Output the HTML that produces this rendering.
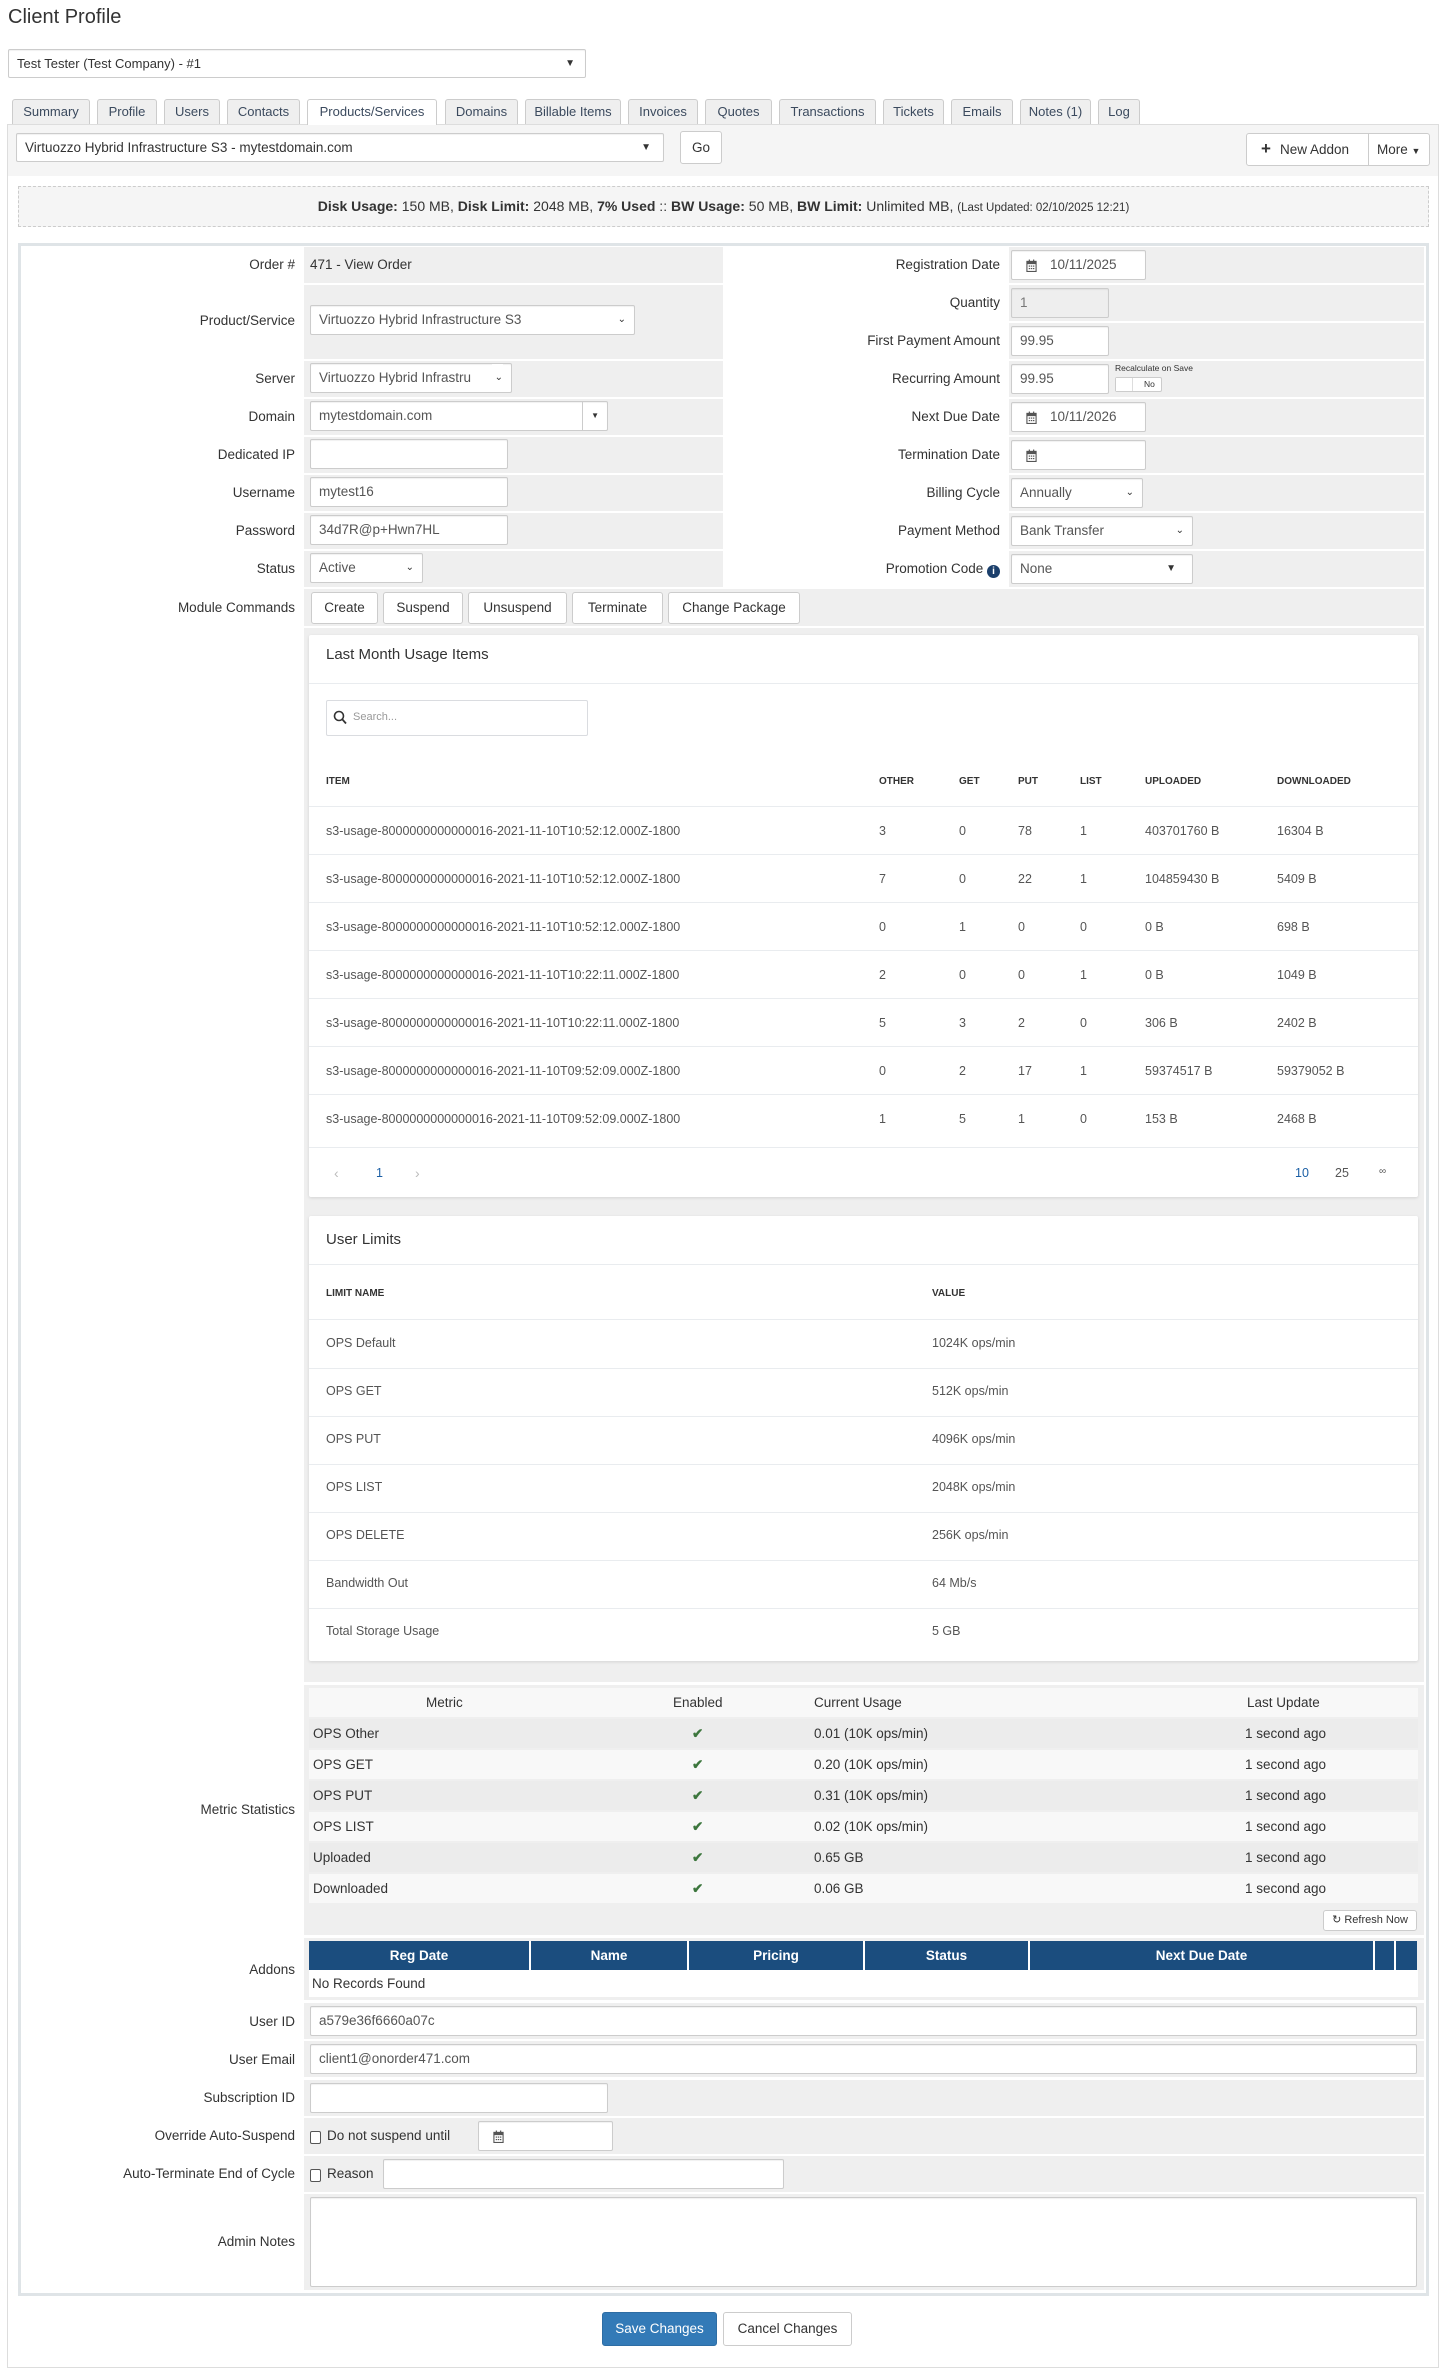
<!DOCTYPE html>
<html><head><meta charset="utf-8">
<style>
*{box-sizing:border-box;margin:0;padding:0}
body{width:1446px;height:2376px;background:#fff;font-family:"Liberation Sans",sans-serif;font-size:13.5px;color:#333;position:relative;overflow:hidden}
.a{position:absolute}
.inp{position:absolute;background:#fff;border:1px solid #ccc;border-radius:2px;height:30px;line-height:28px;padding-left:8px;color:#555;font-size:13.5px;white-space:nowrap;overflow:hidden;box-shadow:inset 0 1px 1px rgba(0,0,0,.06)}
.lbl{position:absolute;text-align:right;white-space:nowrap;font-size:13.5px}
.g{position:absolute;background:#efefef}
.btn{position:absolute;background:#fff;border:1px solid #ccc;border-radius:3px;text-align:center;color:#333;font-size:13.5px}
.tab{position:absolute;top:99px;height:25px;line-height:24px;background:#efefef;border:1px solid #ccc;border-bottom:none;border-radius:3px 3px 0 0;font-size:13px;color:#3b4a5e;text-align:center}
.car{position:absolute;right:8px;font-size:10px;color:#333}
.panel{position:absolute;left:309px;width:1109px;background:#fff;box-shadow:0 1px 3px rgba(0,0,0,.12);border-radius:2px}
.ut{position:absolute;font-size:12.5px;color:#555;white-space:nowrap}
.uh{position:absolute;font-size:10px;font-weight:bold;color:#333}
.sep{position:absolute;left:0;right:0;height:1px;background:#e9ecef}
.mr{position:absolute;left:309px;width:1109px;height:29px;line-height:29px}
.mr span{position:absolute}
.ah{position:absolute;top:1941px;height:29px;line-height:29px;background:#1b4d7e;color:#fff;font-weight:bold;text-align:center;border-right:2px solid #fff}
</style></head><body>

<div class="a" style="left:8px;top:6px;font-size:20px;color:#333">Client Profile</div>
<div class="inp" style="left:8px;top:49px;width:578px;height:29px;line-height:27px;font-size:13px;color:#333">Test Tester (Test Company) - #1<span class="car" style="right:10px">▼</span></div>

<div class="tab" style="left:12px;width:78px">Summary</div>
<div class="tab" style="left:97px;width:60px">Profile</div>
<div class="tab" style="left:164px;width:56px">Users</div>
<div class="tab" style="left:227px;width:73px">Contacts</div>
<div class="tab" style="left:307px;width:130px;background:#fff;height:26px;z-index:3">Products/Services</div>
<div class="tab" style="left:445px;width:73px">Domains</div>
<div class="tab" style="left:525px;width:96px">Billable Items</div>
<div class="tab" style="left:628px;width:70px">Invoices</div>
<div class="tab" style="left:705px;width:67px">Quotes</div>
<div class="tab" style="left:779px;width:97px">Transactions</div>
<div class="tab" style="left:883px;width:61px">Tickets</div>
<div class="tab" style="left:951px;width:62px">Emails</div>
<div class="tab" style="left:1020px;width:71px">Notes (1)</div>
<div class="tab" style="left:1098px;width:42px">Log</div>

<div class="a" style="left:7px;top:124px;width:1432px;height:2244px;border:1px solid #ddd;background:#fff"></div>
<div class="a" style="left:8px;top:125px;width:1430px;height:51px;background:#f5f5f5"></div>
<div class="inp" style="left:16px;top:133px;width:648px;height:29px;color:#333">Virtuozzo Hybrid Infrastructure S3 - mytestdomain.com<span class="car" style="right:12px">▼</span></div>
<div class="btn" style="left:680px;top:131px;width:42px;height:33px;line-height:31px">Go</div>
<div class="btn" style="left:1246px;top:133px;width:184px;height:33px;line-height:31px;text-align:left"><span style="position:absolute;left:14px;font-size:17px;font-weight:bold;top:-1px">+</span><span style="position:absolute;left:33px">New Addon</span><span style="position:absolute;left:121px;top:0;bottom:0;border-left:1px solid #ccc"></span><span style="position:absolute;left:130px">More <span style="font-size:9px">▼</span></span></div>

<div class="a" style="left:18px;top:186px;width:1411px;height:41px;border:1px dashed #ccc;background:#f5f5f5;text-align:center;line-height:39px;font-size:14px"><b>Disk Usage:</b> 150 MB, <b>Disk Limit:</b> 2048 MB, <b>7% Used</b> :: <b>BW Usage:</b> 50 MB, <b>BW Limit:</b> Unlimited MB, <span style="font-size:11.5px">(Last Updated: 02/10/2025 12:21)</span></div>

<div class="a" style="left:18px;top:243px;width:1411px;height:2053px;border:3px solid #dfe4e7;background:#fff"></div>

<div class="g" style="left:304px;top:247px;width:419px;height:36px"></div>
<div class="g" style="left:304px;top:285px;width:419px;height:74px"></div>
<div class="g" style="left:304px;top:361px;width:419px;height:36px"></div>
<div class="g" style="left:304px;top:399px;width:419px;height:36px"></div>
<div class="g" style="left:304px;top:437px;width:419px;height:36px"></div>
<div class="g" style="left:304px;top:475px;width:419px;height:36px"></div>
<div class="g" style="left:304px;top:513px;width:419px;height:36px"></div>
<div class="g" style="left:304px;top:551px;width:419px;height:36px"></div>
<div class="g" style="left:1009px;top:247px;width:415px;height:36px"></div>
<div class="g" style="left:1009px;top:285px;width:415px;height:36px"></div>
<div class="g" style="left:1009px;top:323px;width:415px;height:36px"></div>
<div class="g" style="left:1009px;top:361px;width:415px;height:36px"></div>
<div class="g" style="left:1009px;top:399px;width:415px;height:36px"></div>
<div class="g" style="left:1009px;top:437px;width:415px;height:36px"></div>
<div class="g" style="left:1009px;top:475px;width:415px;height:36px"></div>
<div class="g" style="left:1009px;top:513px;width:415px;height:36px"></div>
<div class="g" style="left:1009px;top:551px;width:415px;height:36px"></div>
<div class="g" style="left:304px;top:589px;width:1120px;height:37px"></div>
<div class="g" style="left:304px;top:628px;width:1120px;height:1054px"></div>
<div class="g" style="left:304px;top:1685px;width:1120px;height:250px"></div>
<div class="g" style="left:304px;top:1938px;width:1120px;height:62px"></div>
<div class="g" style="left:304px;top:2003px;width:1120px;height:36px"></div>
<div class="g" style="left:304px;top:2041px;width:1120px;height:36px"></div>
<div class="g" style="left:304px;top:2080px;width:1120px;height:36px"></div>
<div class="g" style="left:304px;top:2118px;width:1120px;height:36px"></div>
<div class="g" style="left:304px;top:2156px;width:1120px;height:36px"></div>
<div class="g" style="left:304px;top:2194px;width:1120px;height:96px"></div>

<div class="lbl" style="right:1151px;top:257px">Order #</div>
<div class="lbl" style="right:1151px;top:313px">Product/Service</div>
<div class="lbl" style="right:1151px;top:371px">Server</div>
<div class="lbl" style="right:1151px;top:409px">Domain</div>
<div class="lbl" style="right:1151px;top:447px">Dedicated IP</div>
<div class="lbl" style="right:1151px;top:485px">Username</div>
<div class="lbl" style="right:1151px;top:523px">Password</div>
<div class="lbl" style="right:1151px;top:561px">Status</div>
<div class="lbl" style="right:1151px;top:600px">Module Commands</div>
<div class="lbl" style="right:1151px;top:1802px">Metric Statistics</div>
<div class="lbl" style="right:1151px;top:1962px">Addons</div>
<div class="lbl" style="right:1151px;top:2014px">User ID</div>
<div class="lbl" style="right:1151px;top:2052px">User Email</div>
<div class="lbl" style="right:1151px;top:2090px">Subscription ID</div>
<div class="lbl" style="right:1151px;top:2128px">Override Auto-Suspend</div>
<div class="lbl" style="right:1151px;top:2166px">Auto-Terminate End of Cycle</div>
<div class="lbl" style="right:1151px;top:2234px">Admin Notes</div>

<div class="lbl" style="right:446px;top:257px">Registration Date</div>
<div class="lbl" style="right:446px;top:295px">Quantity</div>
<div class="lbl" style="right:446px;top:333px">First Payment Amount</div>
<div class="lbl" style="right:446px;top:371px">Recurring Amount</div>
<div class="lbl" style="right:446px;top:409px">Next Due Date</div>
<div class="lbl" style="right:446px;top:447px">Termination Date</div>
<div class="lbl" style="right:446px;top:485px">Billing Cycle</div>
<div class="lbl" style="right:446px;top:523px">Payment Method</div>
<div class="lbl" style="right:446px;top:561px">Promotion Code <span style="display:inline-block;width:13px;height:13px;border-radius:50%;background:#1b3f6b;color:#fff;font-size:10px;line-height:13px;text-align:center;font-weight:bold;vertical-align:-1px">i</span></div>

<div class="a" style="left:310px;top:257px">471 - View Order</div>
<div class="inp" style="left:310px;top:305px;width:325px">Virtuozzo Hybrid Infrastructure S3<span class="car">⌄</span></div>
<div class="inp" style="left:310px;top:363px;width:202px;padding-right:20px">Virtuozzo Hybrid Infrastru<span class="car" style="background:#fff;padding-left:3px">⌄</span></div>
<div class="inp" style="left:310px;top:401px;width:298px">mytestdomain.com<span style="position:absolute;left:271px;top:0;bottom:0;border-left:1px solid #ccc"></span><span class="car" style="font-size:8px">▼</span></div>
<div class="inp" style="left:310px;top:439px;width:198px"></div>
<div class="inp" style="left:310px;top:477px;width:198px">mytest16</div>
<div class="inp" style="left:310px;top:515px;width:198px">34d7R@p+Hwn7HL</div>
<div class="inp" style="left:310px;top:553px;width:113px">Active<span class="car">⌄</span></div>
<div class="btn" style="left:311px;top:592px;width:67px;height:32px;line-height:30px">Create</div>
<div class="btn" style="left:383px;top:592px;width:80px;height:32px;line-height:30px">Suspend</div>
<div class="btn" style="left:468px;top:592px;width:99px;height:32px;line-height:30px">Unsuspend</div>
<div class="btn" style="left:572px;top:592px;width:91px;height:32px;line-height:30px">Terminate</div>
<div class="btn" style="left:668px;top:592px;width:132px;height:32px;line-height:30px">Change Package</div>

<svg width="0" height="0" style="position:absolute"><defs><symbol id="cal" viewBox="0 0 12 14"><rect x="1" y="2.5" width="10" height="11" fill="none" stroke="#555" stroke-width="1.2"/><rect x="1" y="2.5" width="10" height="3" fill="#555"/><rect x="3" y="0.5" width="1.3" height="3" fill="#555"/><rect x="7.7" y="0.5" width="1.3" height="3" fill="#555"/><g fill="#555"><rect x="3" y="7" width="1.5" height="1.3"/><rect x="5.3" y="7" width="1.5" height="1.3"/><rect x="7.6" y="7" width="1.5" height="1.3"/><rect x="3" y="9.7" width="1.5" height="1.3"/><rect x="5.3" y="9.7" width="1.5" height="1.3"/><rect x="7.6" y="9.7" width="1.5" height="1.3"/></g></symbol></defs></svg>
<div class="inp" style="left:1011px;top:250px;width:135px"><svg width="11" height="13" style="position:absolute;left:14px;top:8px"><use href="#cal"/></svg><span style="position:absolute;left:38px">10/11/2025</span></div>
<div class="inp" style="left:1011px;top:288px;width:98px;background:#eee;color:#777">1</div>
<div class="inp" style="left:1011px;top:326px;width:98px">99.95</div>
<div class="inp" style="left:1011px;top:364px;width:98px">99.95</div>
<div class="a" style="left:1115px;top:363px;font-size:8.5px;color:#333">Recalculate on Save</div>
<div class="a" style="left:1115px;top:377px;width:47px;height:15px;border:1px solid #ccc;border-radius:2px;background:#fff;font-size:8.5px;line-height:13px"><span style="position:absolute;left:0;width:17px;top:0;bottom:0;background:#fff;border-right:1px solid #ddd"></span><span style="position:absolute;left:28px">No</span></div>
<div class="inp" style="left:1011px;top:402px;width:135px"><svg width="11" height="13" style="position:absolute;left:14px;top:8px"><use href="#cal"/></svg><span style="position:absolute;left:38px">10/11/2026</span></div>
<div class="inp" style="left:1011px;top:440px;width:135px"><svg width="11" height="13" style="position:absolute;left:14px;top:8px"><use href="#cal"/></svg></div>
<div class="inp" style="left:1011px;top:478px;width:132px">Annually<span class="car">⌄</span></div>
<div class="inp" style="left:1011px;top:516px;width:182px">Bank Transfer<span class="car">⌄</span></div>
<div class="inp" style="left:1011px;top:554px;width:182px">None<span class="car" style="right:16px">▼</span></div>

<div class="panel" style="top:635px;height:562px">
  <div class="a" style="left:17px;top:11px;font-size:15px;color:#333">Last Month Usage Items</div>
  <div class="sep" style="top:48px"></div>
  <div class="a" style="left:17px;top:65px;width:262px;height:36px;border:1px solid #dadce0;border-radius:2px">
    <svg width="14" height="15" style="position:absolute;left:6px;top:9px"><circle cx="6" cy="6" r="4.5" fill="none" stroke="#333" stroke-width="1.6"/><line x1="9.3" y1="9.3" x2="13" y2="13.5" stroke="#333" stroke-width="1.8"/></svg>
    <span style="position:absolute;left:26px;top:10px;font-size:11px;color:#999">Search...</span></div>
  <div class="uh" style="left:17px;top:141px">ITEM</div>
  <div class="uh" style="left:570px;top:141px">OTHER</div>
  <div class="uh" style="left:650px;top:141px">GET</div>
  <div class="uh" style="left:709px;top:141px">PUT</div>
  <div class="uh" style="left:771px;top:141px">LIST</div>
  <div class="uh" style="left:836px;top:141px">UPLOADED</div>
  <div class="uh" style="left:968px;top:141px">DOWNLOADED</div>
  <div class="sep" style="top:171px"></div>
  <div class="sep" style="top:219px"></div>
  <div class="sep" style="top:267px"></div>
  <div class="sep" style="top:315px"></div>
  <div class="sep" style="top:363px"></div>
  <div class="sep" style="top:411px"></div>
  <div class="sep" style="top:459px"></div>
  <div class="sep" style="top:512px"></div>
  <div class="ut" style="left:17px;top:189px">s3-usage-8000000000000016-2021-11-10T10:52:12.000Z-1800</div><div class="ut" style="left:570px;top:189px">3</div><div class="ut" style="left:650px;top:189px">0</div><div class="ut" style="left:709px;top:189px">78</div><div class="ut" style="left:771px;top:189px">1</div><div class="ut" style="left:836px;top:189px">403701760 B</div><div class="ut" style="left:968px;top:189px">16304 B</div>
  <div class="ut" style="left:17px;top:237px">s3-usage-8000000000000016-2021-11-10T10:52:12.000Z-1800</div><div class="ut" style="left:570px;top:237px">7</div><div class="ut" style="left:650px;top:237px">0</div><div class="ut" style="left:709px;top:237px">22</div><div class="ut" style="left:771px;top:237px">1</div><div class="ut" style="left:836px;top:237px">104859430 B</div><div class="ut" style="left:968px;top:237px">5409 B</div>
  <div class="ut" style="left:17px;top:285px">s3-usage-8000000000000016-2021-11-10T10:52:12.000Z-1800</div><div class="ut" style="left:570px;top:285px">0</div><div class="ut" style="left:650px;top:285px">1</div><div class="ut" style="left:709px;top:285px">0</div><div class="ut" style="left:771px;top:285px">0</div><div class="ut" style="left:836px;top:285px">0 B</div><div class="ut" style="left:968px;top:285px">698 B</div>
  <div class="ut" style="left:17px;top:333px">s3-usage-8000000000000016-2021-11-10T10:22:11.000Z-1800</div><div class="ut" style="left:570px;top:333px">2</div><div class="ut" style="left:650px;top:333px">0</div><div class="ut" style="left:709px;top:333px">0</div><div class="ut" style="left:771px;top:333px">1</div><div class="ut" style="left:836px;top:333px">0 B</div><div class="ut" style="left:968px;top:333px">1049 B</div>
  <div class="ut" style="left:17px;top:381px">s3-usage-8000000000000016-2021-11-10T10:22:11.000Z-1800</div><div class="ut" style="left:570px;top:381px">5</div><div class="ut" style="left:650px;top:381px">3</div><div class="ut" style="left:709px;top:381px">2</div><div class="ut" style="left:771px;top:381px">0</div><div class="ut" style="left:836px;top:381px">306 B</div><div class="ut" style="left:968px;top:381px">2402 B</div>
  <div class="ut" style="left:17px;top:429px">s3-usage-8000000000000016-2021-11-10T09:52:09.000Z-1800</div><div class="ut" style="left:570px;top:429px">0</div><div class="ut" style="left:650px;top:429px">2</div><div class="ut" style="left:709px;top:429px">17</div><div class="ut" style="left:771px;top:429px">1</div><div class="ut" style="left:836px;top:429px">59374517 B</div><div class="ut" style="left:968px;top:429px">59379052 B</div>
  <div class="ut" style="left:17px;top:477px">s3-usage-8000000000000016-2021-11-10T09:52:09.000Z-1800</div><div class="ut" style="left:570px;top:477px">1</div><div class="ut" style="left:650px;top:477px">5</div><div class="ut" style="left:709px;top:477px">1</div><div class="ut" style="left:771px;top:477px">0</div><div class="ut" style="left:836px;top:477px">153 B</div><div class="ut" style="left:968px;top:477px">2468 B</div>
  <div class="ut" style="left:25px;top:530px;color:#bbb;font-size:14px">‹</div>
  <div class="ut" style="left:67px;top:531px;color:#1b5fa5">1</div>
  <div class="ut" style="left:106px;top:530px;color:#bbb;font-size:14px">›</div>
  <div class="ut" style="left:986px;top:531px;color:#1b5fa5">10</div>
  <div class="ut" style="left:1026px;top:531px">25</div>
  <div class="ut" style="left:1070px;top:531px;font-size:10px">∞</div>
</div>

<div class="panel" style="top:1216px;height:445px">
  <div class="a" style="left:17px;top:15px;font-size:15px;color:#333">User Limits</div>
  <div class="sep" style="top:48px"></div>
  <div class="uh" style="left:17px;top:72px">LIMIT NAME</div>
  <div class="uh" style="left:623px;top:72px">VALUE</div>
  <div class="sep" style="top:103px"></div>
  <div class="sep" style="top:152px"></div>
  <div class="sep" style="top:200px"></div>
  <div class="sep" style="top:248px"></div>
  <div class="sep" style="top:296px"></div>
  <div class="sep" style="top:344px"></div>
  <div class="sep" style="top:392px"></div>
  <div class="ut" style="left:17px;top:120px">OPS Default</div><div class="ut" style="left:623px;top:120px">1024K ops/min</div>
  <div class="ut" style="left:17px;top:168px">OPS GET</div><div class="ut" style="left:623px;top:168px">512K ops/min</div>
  <div class="ut" style="left:17px;top:216px">OPS PUT</div><div class="ut" style="left:623px;top:216px">4096K ops/min</div>
  <div class="ut" style="left:17px;top:264px">OPS LIST</div><div class="ut" style="left:623px;top:264px">2048K ops/min</div>
  <div class="ut" style="left:17px;top:312px">OPS DELETE</div><div class="ut" style="left:623px;top:312px">256K ops/min</div>
  <div class="ut" style="left:17px;top:360px">Bandwidth Out</div><div class="ut" style="left:623px;top:360px">64 Mb/s</div>
  <div class="ut" style="left:17px;top:408px">Total Storage Usage</div><div class="ut" style="left:623px;top:408px">5 GB</div>
</div>

<div class="mr" style="top:1688px;background:#f8f8f8"><span style="left:117px">Metric</span><span style="left:364px">Enabled</span><span style="left:505px">Current Usage</span><span style="left:938px">Last Update</span></div>
<div class="mr" style="top:1719px;background:#ececec"><span style="left:4px">OPS Other</span><span style="left:383px;color:#3c763d;font-weight:bold">✔</span><span style="left:505px">0.01 (10K ops/min)</span><span style="left:936px">1 second ago</span></div>
<div class="mr" style="top:1750px;background:#f8f8f8"><span style="left:4px">OPS GET</span><span style="left:383px;color:#3c763d;font-weight:bold">✔</span><span style="left:505px">0.20 (10K ops/min)</span><span style="left:936px">1 second ago</span></div>
<div class="mr" style="top:1781px;background:#ececec"><span style="left:4px">OPS PUT</span><span style="left:383px;color:#3c763d;font-weight:bold">✔</span><span style="left:505px">0.31 (10K ops/min)</span><span style="left:936px">1 second ago</span></div>
<div class="mr" style="top:1812px;background:#f8f8f8"><span style="left:4px">OPS LIST</span><span style="left:383px;color:#3c763d;font-weight:bold">✔</span><span style="left:505px">0.02 (10K ops/min)</span><span style="left:936px">1 second ago</span></div>
<div class="mr" style="top:1843px;background:#ececec"><span style="left:4px">Uploaded</span><span style="left:383px;color:#3c763d;font-weight:bold">✔</span><span style="left:505px">0.65 GB</span><span style="left:936px">1 second ago</span></div>
<div class="mr" style="top:1874px;background:#f8f8f8"><span style="left:4px">Downloaded</span><span style="left:383px;color:#3c763d;font-weight:bold">✔</span><span style="left:505px">0.06 GB</span><span style="left:936px">1 second ago</span></div>
<div class="btn" style="left:1323px;top:1910px;width:94px;height:21px;line-height:19px;font-size:11px">↻ Refresh Now</div>

<div class="ah" style="left:309px;width:222px">Reg Date</div>
<div class="ah" style="left:531px;width:158px">Name</div>
<div class="ah" style="left:689px;width:176px">Pricing</div>
<div class="ah" style="left:865px;width:165px">Status</div>
<div class="ah" style="left:1030px;width:345px">Next Due Date</div>
<div class="ah" style="left:1375px;width:21px"></div>
<div class="ah" style="left:1396px;width:21px;border-right:none"></div>
<div class="a" style="left:309px;top:1970px;width:1109px;height:27px;background:#fff;line-height:27px;padding-left:3px">No Records Found</div>

<div class="inp" style="left:310px;top:2006px;width:1107px">a579e36f6660a07c</div>
<div class="inp" style="left:310px;top:2044px;width:1107px">client1@onorder471.com</div>
<div class="inp" style="left:310px;top:2083px;width:298px"></div>
<div class="a" style="left:310px;top:2131px;width:11px;height:13px;border:1px solid #555;border-radius:2px;background:#fff"></div>
<div class="a" style="left:327px;top:2128px">Do not suspend until</div>
<div class="inp" style="left:478px;top:2121px;width:135px"><svg width="11" height="13" style="position:absolute;left:14px;top:8px"><use href="#cal"/></svg></div>
<div class="a" style="left:310px;top:2169px;width:11px;height:13px;border:1px solid #555;border-radius:2px;background:#fff"></div>
<div class="a" style="left:327px;top:2166px">Reason</div>
<div class="inp" style="left:383px;top:2159px;width:401px"></div>
<div class="inp" style="left:310px;top:2197px;width:1107px;height:90px"></div>

<div class="a" style="left:602px;top:2312px;width:115px;height:34px;background:#337ab7;border:1px solid #2e6da4;border-radius:3px;color:#fff;text-align:center;line-height:32px">Save Changes</div>
<div class="btn" style="left:723px;top:2312px;width:129px;height:34px;line-height:32px">Cancel Changes</div>

</body></html>
